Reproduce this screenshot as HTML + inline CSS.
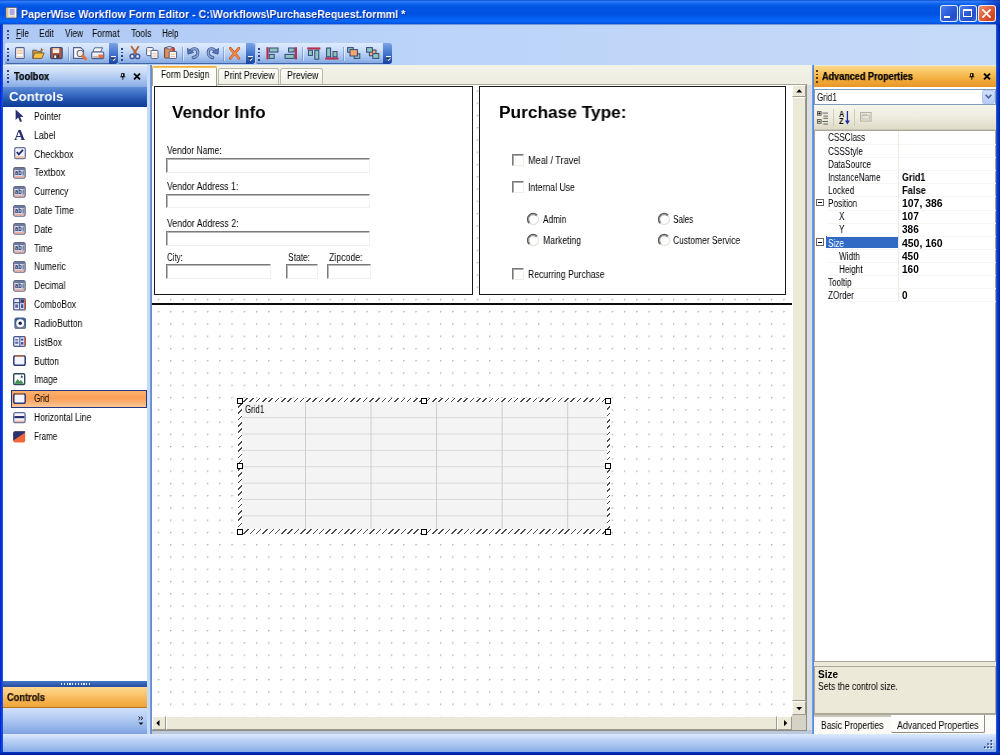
<!DOCTYPE html>
<html><head><meta charset="utf-8"><title>PaperWise Workflow Form Editor</title>
<style>
*{box-sizing:border-box;margin:0;padding:0}
html,body{width:1000px;height:755px;overflow:hidden;background:#0831d9}
body{font-family:"Liberation Sans",sans-serif;font-size:10px;color:#000;position:relative}
.a{position:absolute}
.t{position:absolute;white-space:nowrap;line-height:14px;height:14px;transform-origin:0 50%;will-change:transform}
svg{position:absolute;overflow:visible}
.tb{background:linear-gradient(#deebfd 0,#cfe0fa 30%,#a9c5f0 70%,#83a9e2 100%);border-bottom:1px solid #4465a8;border-radius:2px 0 0 2px}
.tbend{background:linear-gradient(#7ba4e6 0,#4f7fd2 40%,#2c5cba 75%,#17429e 100%);border-radius:0 3px 3px 0}
.grip{width:2px;background-image:repeating-linear-gradient(#2a4488 0,#2a4488 1.7px,rgba(255,255,255,.0) 1.7px,rgba(255,255,255,0) 3.7px)}
.sep{width:1px;background:rgba(90,125,195,.55);box-shadow:1px 0 0 rgba(240,246,255,.6)}
.tx{border:1px solid;border-color:#7b7b7b #f1f0ea #f1f0ea #7b7b7b;background:#fff;box-shadow:inset 1px 1px 0 #b9b9b9}
.cb{border:1px solid;border-color:#7a7a7a #eeede6 #eeede6 #7a7a7a;background:#fff;box-shadow:inset 1px 1px 0 #a8a8a8}
.hd{border:1px solid #000;background:#fff;width:6px;height:6px}
</style></head><body>
<div class="a" style="left:0px;top:0px;width:1000px;height:755px;background:#0a3bd6"></div>
<div class="a" style="left:0px;top:24px;width:3.4px;height:731px;background:linear-gradient(90deg,#0318d4,#0c3ede 45%,#1256e4)"></div>
<div class="a" style="left:996.3px;top:24px;width:3.7px;height:731px;background:linear-gradient(90deg,#2d66dc,#0a3cc8 35%,#001eb0)"></div>
<div class="a" style="left:0px;top:751.3px;width:1000px;height:3.7px;background:linear-gradient(#0a44d0,#0030b8 40%,#00199c)"></div>
<div class="a" style="left:0px;top:0px;width:1000px;height:24.5px;background:linear-gradient(#0c48d2 0,#2f7cf5 5%,#2373f3 10%,#0a5eee 18%,#0054e4 30%,#0052e2 58%,#0560f2 72%,#0866f6 86%,#0456e4 93%,#003cc4 100%)"></div>
<div class="a" style="left:900px;top:0px;width:100px;height:24.5px;background:linear-gradient(90deg,rgba(0,30,160,0) 0,rgba(0,30,160,0) 80%,rgba(0,26,150,.55) 100%)"></div>
<svg style="left:5.4px;top:7px" width="13" height="11.6" viewBox="0 0 13 14" preserveAspectRatio="none"><rect x="1" y="0.6" width="10.8" height="12.6" rx="1" fill="#fbf7ee" stroke="#6a5c50" stroke-width=".9"/><rect x="1.5" y="1.1" width="2" height="11.6" fill="#e0c08c"/><rect x="4.6" y="2.2" width="5" height="7.4" fill="#a9a6ea"/><rect x="4.6" y="10.2" width="5.4" height="1.6" fill="#e6cfae"/></svg>
<span class="t" style="left:20.8px;top:7.0px;font-size:11.5px;font-weight:bold;color:#fff;transform:scaleX(0.925);text-shadow:1px 1px 0 #0a2a90">PaperWise Workflow Form Editor - C:\Workflows\PurchaseRequest.formml *</span>
<div class="a" style="left:940px;top:5px;width:17.5px;height:17.2px;border:1px solid rgba(255,255,255,.88);border-radius:3px;background:linear-gradient(135deg,#4d7fee 0,#2f5fdc 40%,#2450c8 75%,#3a66d8 100%)"><div class="a" style="left:3.4px;top:10px;width:5.8px;height:2px;background:#fff"></div></div>
<div class="a" style="left:959px;top:5px;width:17.5px;height:17.2px;border:1px solid rgba(255,255,255,.88);border-radius:3px;background:linear-gradient(135deg,#4d7fee 0,#2f5fdc 40%,#2450c8 75%,#3a66d8 100%)"><div class="a" style="left:2.8px;top:3.2px;width:9.2px;height:8.2px;border:1.1px solid #fff;border-top-width:2.2px"></div></div>
<div class="a" style="left:978px;top:5px;width:17.5px;height:17.2px;border:1px solid rgba(255,255,255,.88);border-radius:3px;background:linear-gradient(135deg,#ee9276 0,#e2643e 40%,#cf4420 80%,#dc5834 100%)"><svg style="left:3px;top:2.8px" width="9" height="9" viewBox="0 0 10 10"><path d="M1 1L9 9M9 1L1 9" stroke="#fff" stroke-width="1.9" stroke-linecap="round"/></svg></div>
<div class="a" style="left:3.4px;top:24.3px;width:993px;height:41px;background:linear-gradient(90deg,#adc8f4 0,#bcd4f8 45%,#c4daf9 100%)"></div>
<div class="a" style="left:3.4px;top:24.3px;width:993px;height:1.2px;background:rgba(60,100,200,.55)"></div>
<div class="a grip" style="left:6.6px;top:29.6px;width:2px;height:10px;"></div>
<span class="t" style="left:16.1px;top:26.9px;font-size:10px;transform:scaleX(0.800);">File</span>
<span class="t" style="left:38.8px;top:26.9px;font-size:10px;transform:scaleX(0.853);">Edit</span>
<span class="t" style="left:64.5px;top:26.9px;font-size:10px;transform:scaleX(0.837);">View</span>
<span class="t" style="left:92.0px;top:26.9px;font-size:10px;transform:scaleX(0.865);">Format</span>
<span class="t" style="left:131.0px;top:26.9px;font-size:10px;transform:scaleX(0.878);">Tools</span>
<span class="t" style="left:161.5px;top:26.9px;font-size:10px;transform:scaleX(0.802);">Help</span>
<div class="a" style="left:16.3px;top:38.2px;width:5.2px;height:0.9px;background:#222"></div>
<div class="a tb" style="left:5px;top:43.4px;width:103.6px;height:20.4px;"></div>
<div class="a tbend" style="left:108.6px;top:43.4px;width:9.0px;height:20.4px;"></div>
<div class="a grip" style="left:7.3px;top:48px;width:2px;height:13px;"></div>
<svg style="left:109.8px;top:56.3px" width="7" height="6" viewBox="0 0 7 6"><path d="M1 0.6H6" stroke="#fff" stroke-width="1"/><path d="M1 2.4H6L3.5 5Z" fill="#fff"/><path d="M0.5 1.8H5.2L2.9 4.2Z" fill="#000" opacity=".75"/></svg>
<div class="a tb" style="left:118.2px;top:43.4px;width:127.49999999999999px;height:20.4px;"></div>
<div class="a tbend" style="left:245.7px;top:43.4px;width:9.0px;height:20.4px;"></div>
<div class="a grip" style="left:120.5px;top:48px;width:2px;height:13px;"></div>
<svg style="left:246.89999999999998px;top:56.3px" width="7" height="6" viewBox="0 0 7 6"><path d="M1 0.6H6" stroke="#fff" stroke-width="1"/><path d="M1 2.4H6L3.5 5Z" fill="#fff"/><path d="M0.5 1.8H5.2L2.9 4.2Z" fill="#000" opacity=".75"/></svg>
<div class="a tb" style="left:255.8px;top:43.4px;width:127.59999999999997px;height:20.4px;"></div>
<div class="a tbend" style="left:383.4px;top:43.4px;width:8.900000000000034px;height:20.4px;"></div>
<div class="a grip" style="left:258.1px;top:48px;width:2px;height:13px;"></div>
<svg style="left:384.59999999999997px;top:56.3px" width="7" height="6" viewBox="0 0 7 6"><path d="M1 0.6H6" stroke="#fff" stroke-width="1"/><path d="M1 2.4H6L3.5 5Z" fill="#fff"/><path d="M0.5 1.8H5.2L2.9 4.2Z" fill="#000" opacity=".75"/></svg>
<div class="a sep" style="left:67.6px;top:46.5px;width:1px;height:14px;"></div>
<div class="a sep" style="left:181.7px;top:46.5px;width:1px;height:14px;"></div>
<div class="a sep" style="left:222.8px;top:46.5px;width:1px;height:14px;"></div>
<div class="a sep" style="left:301.6px;top:46.5px;width:1px;height:14px;"></div>
<div class="a sep" style="left:342.7px;top:46.5px;width:1px;height:14px;"></div>
<svg style="left:15.3px;top:47px" width="10" height="12" viewBox="0 0 10 12" preserveAspectRatio="none"><rect x=".6" y=".6" width="8.6" height="10.8" rx="1" fill="#fdfaf6" stroke="#4e5f8e" stroke-width="1.1"/><rect x="2" y="2.8" width="5.8" height="1.6" fill="#f2c4a4"/><rect x="2" y="5.4" width="5.8" height="1.6" fill="#f2c4a4"/><rect x="1.2" y="9" width="7.4" height="1.8" fill="#e9d9d0"/></svg>
<svg style="left:32.2px;top:46.6px" width="13" height="12.4" viewBox="0 0 13 12.4" preserveAspectRatio="none"><path d="M.8 3.2H4.6L5.6 4.4H9.6V11.4H.8Z" fill="#d89a28" stroke="#5a5a78" stroke-width="1"/><path d="M2.6 6H12.2L9.8 11.4H.9Z" fill="#f6c244" stroke="#7a5a30" stroke-width=".9"/><path d="M9.4 .6L10.2 2.2L11.8 2.6L10.4 3.4L10.2 4.8L9.2 3.6L7.8 3.6L8.8 2.4Z" fill="#a8643c"/></svg>
<svg style="left:49.8px;top:46.8px" width="13" height="12.2" viewBox="0 0 13 12.2" preserveAspectRatio="none"><rect x=".6" y=".6" width="11.6" height="11" rx="1" fill="#a85a42" stroke="#3d4a78" stroke-width="1.1"/><rect x="2.8" y="1.2" width="6.4" height="4.8" fill="#fbeee6"/><rect x="2.8" y="1.2" width="6.4" height="1.6" fill="#f2c4a4"/><rect x="3.2" y="7.6" width="6" height="3.6" fill="#58383a"/><rect x="4.2" y="8.4" width="2" height="2.6" fill="#f4f4f8"/></svg>
<svg style="left:73px;top:46.8px" width="14" height="13.4" viewBox="0 0 14 13.4" preserveAspectRatio="none"><path d="M.6 .6H7.6L10.6 3.4V11.4H.6Z" fill="#fdfcfa" stroke="#4e5f8e" stroke-width="1.1"/><circle cx="7.2" cy="6.4" r="3.1" fill="#f2eee8" stroke="#6a6a80" stroke-width="1.1"/><path d="M9.6 8.8L12.6 12" stroke="#e8703a" stroke-width="2.8" stroke-linecap="round"/></svg>
<svg style="left:90.8px;top:46.6px" width="13.4" height="12.8" viewBox="0 0 13.4 12.8" preserveAspectRatio="none"><path d="M3.6 .8H11.6L9.6 5H1.8Z" fill="#fbfbfd" stroke="#4e5f8e" stroke-width="1"/><rect x=".7" y="5" width="12" height="6.6" rx="1.2" fill="#eef0f6" stroke="#4e5f8e" stroke-width="1.1"/><rect x="7.4" y="7.6" width="4.8" height="3.4" fill="#e8703a"/><rect x="1.6" y="9.2" width="5.6" height="1.6" fill="#b8a8a8"/></svg>
<svg style="left:129.2px;top:46.2px" width="12" height="13.6" viewBox="0 0 12 13.6" preserveAspectRatio="none"><path d="M2.6 .8L7.6 8.4M9.4 .8L4.4 8.4" stroke="#b8683a" stroke-width="1.9" stroke-linecap="round"/><circle cx="3.2" cy="10.4" r="2.1" fill="#dfe8f8" stroke="#3f5aa0" stroke-width="1.5"/><circle cx="8.6" cy="10.4" r="2.1" fill="#dfe8f8" stroke="#3f5aa0" stroke-width="1.5"/></svg>
<svg style="left:146.4px;top:47px" width="13" height="12" viewBox="0 0 13 12" preserveAspectRatio="none"><rect x=".6" y=".6" width="6.6" height="8" rx=".8" fill="#fdfcfa" stroke="#4e5f8e" stroke-width="1"/><rect x="1.8" y="3" width="4" height="1.3" fill="#f2c4a4"/><rect x="5" y="3.4" width="7" height="8" rx=".8" fill="#fdfcfa" stroke="#4e5f8e" stroke-width="1"/><rect x="6.4" y="6" width="4.4" height="1.3" fill="#f2c4a4"/><rect x="6.4" y="8.4" width="4.4" height="1.3" fill="#f2c4a4"/></svg>
<svg style="left:163.8px;top:46.4px" width="13.4" height="13" viewBox="0 0 13.4 13" preserveAspectRatio="none"><rect x=".6" y="1.6" width="9.6" height="10.4" rx="1" fill="#e0925a" stroke="#6a4a48" stroke-width="1.1"/><rect x="3" y=".5" width="4.8" height="2.6" rx=".8" fill="#c8c8d8" stroke="#5a5a78" stroke-width=".8"/><rect x="8.2" y="2.2" width="2.4" height="3" fill="#d83a28"/><rect x="5.2" y="5.4" width="7.4" height="7" rx=".6" fill="#fdfcfa" stroke="#4e5f8e" stroke-width="1"/><rect x="6.6" y="7.6" width="4.6" height="1.2" fill="#f2c4a4"/><rect x="6.6" y="9.8" width="4.6" height="1.2" fill="#f2c4a4"/></svg>
<svg style="left:187px;top:46.2px" width="13" height="13" viewBox="0 0 13 13" preserveAspectRatio="none"><path d="M3.4 5.6C5.4 1.6 10.4 2 10.8 6.2C11 9.2 8.8 11.2 6.2 11.6" fill="none" stroke="#405890" stroke-width="3.1" stroke-linecap="round"/><path d="M3.4 5.6C5.4 1.6 10.4 2 10.8 6.2C11 9.2 8.8 11.2 6.2 11.6" fill="none" stroke="#8aa4d8" stroke-width="1.5" stroke-linecap="round"/><path d="M.4 2.4L1 8.2L6.6 6.4Z" fill="#5a78b8" stroke="#405890" stroke-width=".9" stroke-linejoin="round"/></svg>
<svg style="left:205.6px;top:46.2px" width="13" height="13" viewBox="0 0 13 13" preserveAspectRatio="none"><g transform="translate(13,0) scale(-1,1)"><path d="M3.4 5.6C5.4 1.6 10.4 2 10.8 6.2C11 9.2 8.8 11.2 6.2 11.6" fill="none" stroke="#405890" stroke-width="3.1" stroke-linecap="round"/><path d="M3.4 5.6C5.4 1.6 10.4 2 10.8 6.2C11 9.2 8.8 11.2 6.2 11.6" fill="none" stroke="#8aa4d8" stroke-width="1.5" stroke-linecap="round"/><path d="M.4 2.4L1 8.2L6.6 6.4Z" fill="#5a78b8" stroke="#405890" stroke-width=".9" stroke-linejoin="round"/></g></svg>
<svg style="left:229.4px;top:46.6px" width="11.2" height="12.6" viewBox="0 0 13.4 13" preserveAspectRatio="none"><path d="M1.6 1.4L11.8 11.6M11.8 1.4L1.6 11.6" stroke="#c85a28" stroke-width="3.2" stroke-linecap="round"/><path d="M1.8 1.6L11.6 11.4M11.6 1.6L1.8 11.4" stroke="#f48a44" stroke-width="1.7" stroke-linecap="round"/></svg>
<svg style="left:266px;top:46.8px" width="13" height="12.6" viewBox="0 0 13 12.6" preserveAspectRatio="none"><rect x=".4" y=".2" width="2.2" height="12.2" fill="#b8324e"/><rect x="3.2" y="1" width="8.8" height="4" fill="#8cc8b8" stroke="#35457c" stroke-width="1"/><rect x="3.2" y="7.4" width="5" height="4" fill="#8cc8b8" stroke="#35457c" stroke-width="1"/></svg>
<svg style="left:283.8px;top:46.8px" width="13.4" height="12.6" viewBox="0 0 13.4 12.6" preserveAspectRatio="none"><rect x="10.8" y=".2" width="2.2" height="12.2" fill="#b8324e"/><rect x="4.6" y="1" width="5.6" height="4" fill="#8cc8b8" stroke="#35457c" stroke-width="1"/><rect x="1" y="7.4" width="9.2" height="4" fill="#8cc8b8" stroke="#35457c" stroke-width="1"/></svg>
<svg style="left:306.8px;top:46.6px" width="13.6" height="13" viewBox="0 0 13.6 13" preserveAspectRatio="none"><rect x=".2" y=".4" width="13.2" height="2.2" fill="#b8324e"/><rect x="1.4" y="3.2" width="4" height="5.2" fill="#8cc8b8" stroke="#35457c" stroke-width="1"/><rect x="7.8" y="3.2" width="4" height="9" fill="#8cc8b8" stroke="#35457c" stroke-width="1"/></svg>
<svg style="left:324.6px;top:46.6px" width="13.6" height="13" viewBox="0 0 13.6 13" preserveAspectRatio="none"><rect x=".2" y="10.4" width="13.2" height="2.2" fill="#b8324e"/><rect x="1.6" y="1" width="4" height="8.8" fill="#8cc8b8" stroke="#35457c" stroke-width="1"/><rect x="8" y="4.6" width="4" height="5.2" fill="#8cc8b8" stroke="#35457c" stroke-width="1"/></svg>
<svg style="left:347px;top:47px" width="13.6" height="12.4" viewBox="0 0 13.6 12.4" preserveAspectRatio="none"><rect x="0.6" y="0.6" width="5.6" height="4.6" fill="#8cc8b8" stroke="#35457c" stroke-width="1"/><rect x="7.2" y="6.8" width="5.6" height="4.6" fill="#8cc8b8" stroke="#35457c" stroke-width="1"/><rect x="3" y="2.6" width="7.4" height="6.4" fill="#f6a868" stroke="#35457c" stroke-width="1"/></svg>
<svg style="left:365.8px;top:47px" width="13.6" height="12.4" viewBox="0 0 13.6 12.4" preserveAspectRatio="none"><rect x="3.4" y="3" width="6.6" height="5.8" fill="#f6a868" stroke="#35457c" stroke-width="1"/><rect x="0.6" y="0.6" width="5.8" height="4.6" fill="#8cc8b8" stroke="#35457c" stroke-width="1"/><rect x="6.8" y="6.6" width="6" height="4.8" fill="#8cc8b8" stroke="#35457c" stroke-width="1"/></svg>
<div class="a" style="left:3.4px;top:65px;width:143.9px;height:669px;background:#fff"></div>
<div class="a" style="left:3.4px;top:65.3px;width:143.9px;height:21.9px;background:linear-gradient(#dbe8fb 0,#cadcf8 30%,#a6c2ee 70%,#87abe4 100%)"></div>
<div class="a" style="left:3.4px;top:65px;width:143.9px;height:0.8px;background:#eef4fd"></div>
<div class="a grip" style="left:7px;top:69.6px;width:2px;height:14px;"></div>
<span class="t" style="left:14.1px;top:69.6px;font-size:10px;font-weight:bold;transform:scaleX(0.923);-webkit-text-stroke:.25px #000">Toolbox</span>
<svg style="left:119.8px;top:73.2px" width="5.6" height="7.2" viewBox="0 0 7 9"><path d="M1.8 0.7H5.2V4.4H1.8Z" fill="none" stroke="#000" stroke-width="1"/><path d="M4.6 0.7V4.4" stroke="#000" stroke-width="1.2"/><path d="M0.4 4.8H6.6" stroke="#000" stroke-width="1.1"/><path d="M3.5 5V8.6" stroke="#000" stroke-width="1"/></svg>
<svg style="left:133.3px;top:72.8px" width="8" height="7" viewBox="0 0 8 7"><path d="M1 0.6L7 6.4M7 0.6L1 6.4" stroke="#000" stroke-width="1.9"/></svg>
<div class="a" style="left:3.4px;top:87.1px;width:143.9px;height:19.6px;background:linear-gradient(#5f8cd8 0,#3f72c8 30%,#1c4fa8 70%,#0c3c96 100%)"></div>
<span class="t" style="left:8.8px;top:90.4px;font-size:13.5px;font-weight:bold;color:#fff;transform:scaleX(0.980);">Controls</span>
<div class="a" style="left:11.4px;top:389.9px;width:135.9px;height:17.7px;border:1px solid #27357e;background:linear-gradient(#fbb26e 0,#fa9f58 45%,#fbb77c 80%,#fcc998 100%)"></div>
<span class="t" style="left:33.7px;top:109.8px;font-size:10px;transform:scaleX(0.855);">Pointer</span>
<span class="t" style="left:33.7px;top:128.7px;font-size:10px;transform:scaleX(0.875);">Label</span>
<span class="t" style="left:33.7px;top:147.5px;font-size:10px;transform:scaleX(0.888);">Checkbox</span>
<span class="t" style="left:33.7px;top:166.3px;font-size:10px;transform:scaleX(0.902);">Textbox</span>
<span class="t" style="left:33.7px;top:185.1px;font-size:10px;transform:scaleX(0.848);">Currency</span>
<span class="t" style="left:33.7px;top:203.9px;font-size:10px;transform:scaleX(0.875);">Date Time</span>
<span class="t" style="left:33.7px;top:222.8px;font-size:10px;transform:scaleX(0.876);">Date</span>
<span class="t" style="left:33.7px;top:241.6px;font-size:10px;transform:scaleX(0.846);">Time</span>
<span class="t" style="left:33.7px;top:260.4px;font-size:10px;transform:scaleX(0.851);">Numeric</span>
<span class="t" style="left:33.7px;top:279.2px;font-size:10px;transform:scaleX(0.869);">Decimal</span>
<span class="t" style="left:33.7px;top:298.0px;font-size:10px;transform:scaleX(0.849);">ComboBox</span>
<span class="t" style="left:33.7px;top:316.9px;font-size:10px;transform:scaleX(0.879);">RadioButton</span>
<span class="t" style="left:33.7px;top:335.7px;font-size:10px;transform:scaleX(0.854);">ListBox</span>
<span class="t" style="left:33.7px;top:354.5px;font-size:10px;transform:scaleX(0.868);">Button</span>
<span class="t" style="left:33.7px;top:373.3px;font-size:10px;transform:scaleX(0.845);">Image</span>
<span class="t" style="left:33.7px;top:392.1px;font-size:10px;transform:scaleX(0.809);">Grid</span>
<span class="t" style="left:33.7px;top:411.0px;font-size:10px;transform:scaleX(0.859);">Horizontal Line</span>
<span class="t" style="left:33.7px;top:429.8px;font-size:10px;transform:scaleX(0.806);">Frame</span>
<svg style="left:15.2px;top:109.2px" width="9.6" height="13.6" viewBox="0 0 9 13" preserveAspectRatio="none"><path d="M.6 .4V10.4L3 8.2L4.8 12.4L6.6 11.6L4.8 7.6L8 7.4Z" fill="#2a3170"/></svg>
<span class="t" style="left:14.4px;top:126.6px;font-family:'Liberation Serif',serif;font-weight:bold;font-size:15.4px;line-height:16px;height:16px;color:#2a3170">A</span>
<svg style="left:14px;top:147.44px" width="12" height="12.4" viewBox="0 0 12 12.4" preserveAspectRatio="none"><rect x=".7" y=".7" width="10.6" height="11" rx="1.4" fill="#eef0fa" stroke="#6a7498" stroke-width="1.3"/><rect x="1.6" y="9.2" width="8.8" height="1.9" fill="#f2c4a4"/><path d="M2.8 5L4.8 7.4L9 2.8" fill="none" stroke="#2a3170" stroke-width="1.9"/></svg>
<svg style="left:13.2px;top:166.86px" width="13" height="12" viewBox="0 0 13 12" preserveAspectRatio="none"><rect x=".7" y=".7" width="11.4" height="10.4" rx="1.6" fill="#d6daee" stroke="#5e6886" stroke-width="1.3"/><rect x="1.4" y="1.3" width="10" height="1.5" fill="#4f5f88"/><rect x="1.5" y="9" width="9.8" height="1.7" fill="#eab0a0"/><text x="2.1" y="8.3" font-family="Liberation Sans,sans-serif" font-size="6.6" font-weight="bold" fill="#2c3462" textLength="6.6" lengthAdjust="spacingAndGlyphs">ab</text><rect x="9.7" y="3.6" width=".8" height="4.8" fill="#2c3462"/></svg>
<svg style="left:13.2px;top:185.68px" width="13" height="12" viewBox="0 0 13 12" preserveAspectRatio="none"><rect x=".7" y=".7" width="11.4" height="10.4" rx="1.6" fill="#d6daee" stroke="#5e6886" stroke-width="1.3"/><rect x="1.4" y="1.3" width="10" height="1.5" fill="#4f5f88"/><rect x="1.5" y="9" width="9.8" height="1.7" fill="#eab0a0"/><text x="2.1" y="8.3" font-family="Liberation Sans,sans-serif" font-size="6.6" font-weight="bold" fill="#2c3462" textLength="6.6" lengthAdjust="spacingAndGlyphs">ab</text><rect x="9.7" y="3.6" width=".8" height="4.8" fill="#2c3462"/></svg>
<svg style="left:13.2px;top:204.5px" width="13" height="12" viewBox="0 0 13 12" preserveAspectRatio="none"><rect x=".7" y=".7" width="11.4" height="10.4" rx="1.6" fill="#d6daee" stroke="#5e6886" stroke-width="1.3"/><rect x="1.4" y="1.3" width="10" height="1.5" fill="#4f5f88"/><rect x="1.5" y="9" width="9.8" height="1.7" fill="#eab0a0"/><text x="2.1" y="8.3" font-family="Liberation Sans,sans-serif" font-size="6.6" font-weight="bold" fill="#2c3462" textLength="6.6" lengthAdjust="spacingAndGlyphs">ab</text><rect x="9.7" y="3.6" width=".8" height="4.8" fill="#2c3462"/></svg>
<svg style="left:13.2px;top:223.32000000000002px" width="13" height="12" viewBox="0 0 13 12" preserveAspectRatio="none"><rect x=".7" y=".7" width="11.4" height="10.4" rx="1.6" fill="#d6daee" stroke="#5e6886" stroke-width="1.3"/><rect x="1.4" y="1.3" width="10" height="1.5" fill="#4f5f88"/><rect x="1.5" y="9" width="9.8" height="1.7" fill="#eab0a0"/><text x="2.1" y="8.3" font-family="Liberation Sans,sans-serif" font-size="6.6" font-weight="bold" fill="#2c3462" textLength="6.6" lengthAdjust="spacingAndGlyphs">ab</text><rect x="9.7" y="3.6" width=".8" height="4.8" fill="#2c3462"/></svg>
<svg style="left:13.2px;top:242.14000000000001px" width="13" height="12" viewBox="0 0 13 12" preserveAspectRatio="none"><rect x=".7" y=".7" width="11.4" height="10.4" rx="1.6" fill="#d6daee" stroke="#5e6886" stroke-width="1.3"/><rect x="1.4" y="1.3" width="10" height="1.5" fill="#4f5f88"/><rect x="1.5" y="9" width="9.8" height="1.7" fill="#eab0a0"/><text x="2.1" y="8.3" font-family="Liberation Sans,sans-serif" font-size="6.6" font-weight="bold" fill="#2c3462" textLength="6.6" lengthAdjust="spacingAndGlyphs">ab</text><rect x="9.7" y="3.6" width=".8" height="4.8" fill="#2c3462"/></svg>
<svg style="left:13.2px;top:260.96px" width="13" height="12" viewBox="0 0 13 12" preserveAspectRatio="none"><rect x=".7" y=".7" width="11.4" height="10.4" rx="1.6" fill="#d6daee" stroke="#5e6886" stroke-width="1.3"/><rect x="1.4" y="1.3" width="10" height="1.5" fill="#4f5f88"/><rect x="1.5" y="9" width="9.8" height="1.7" fill="#eab0a0"/><text x="2.1" y="8.3" font-family="Liberation Sans,sans-serif" font-size="6.6" font-weight="bold" fill="#2c3462" textLength="6.6" lengthAdjust="spacingAndGlyphs">ab</text><rect x="9.7" y="3.6" width=".8" height="4.8" fill="#2c3462"/></svg>
<svg style="left:13.2px;top:279.78px" width="13" height="12" viewBox="0 0 13 12" preserveAspectRatio="none"><rect x=".7" y=".7" width="11.4" height="10.4" rx="1.6" fill="#d6daee" stroke="#5e6886" stroke-width="1.3"/><rect x="1.4" y="1.3" width="10" height="1.5" fill="#4f5f88"/><rect x="1.5" y="9" width="9.8" height="1.7" fill="#eab0a0"/><text x="2.1" y="8.3" font-family="Liberation Sans,sans-serif" font-size="6.6" font-weight="bold" fill="#2c3462" textLength="6.6" lengthAdjust="spacingAndGlyphs">ab</text><rect x="9.7" y="3.6" width=".8" height="4.8" fill="#2c3462"/></svg>
<svg style="left:13.2px;top:298.0px" width="13" height="12.6" viewBox="0 0 13 12.6" preserveAspectRatio="none"><rect x=".7" y=".7" width="11.6" height="11.2" rx="1" fill="#eceffa" stroke="#4a5a90" stroke-width="1.3"/><path d="M.8 4.6H12.2M6.6 .8V12" stroke="#4a5a90" stroke-width="1.1"/><rect x="7.4" y="1.4" width="4.2" height="2.6" fill="#3a3a6a"/><rect x="11" y="1" width="1.4" height="10.6" fill="#d8684a"/><rect x="2.2" y="6.4" width="3" height="3.4" fill="#5a6aa0"/><rect x="8" y="6.2" width="2.4" height="4" fill="#3f56a8"/></svg>
<svg style="left:13.8px;top:316.82px" width="12.4" height="12.4" viewBox="0 0 12.4 12.4" preserveAspectRatio="none"><rect x=".4" y=".4" width="11.6" height="11.6" rx="2.6" fill="#3f5f90"/><rect x=".4" y="8" width="11.6" height="4" rx="2" fill="#8a8a98" opacity=".6"/><circle cx="6.2" cy="6.2" r="4" fill="#f8f8fc"/><circle cx="6.2" cy="6.2" r="1.7" fill="#1e2248"/></svg>
<svg style="left:13.2px;top:336.24px" width="13" height="11" viewBox="0 0 13 11" preserveAspectRatio="none"><rect x=".7" y=".7" width="11.6" height="9.6" rx="1" fill="#e6eafa" stroke="#4a5a90" stroke-width="1.3"/><path d="M6.8 .8V10.2" stroke="#4a5a90" stroke-width="1.1"/><rect x="11" y="1" width="1.4" height="9" fill="#d8684a"/><rect x="2.2" y="3.2" width="3" height="1.2" fill="#4a5a90"/><rect x="2.2" y="5.6" width="3" height="2.2" fill="#5a6aa0"/><rect x="8" y="2.6" width="2.4" height="2" fill="#3f56a8"/><rect x="8" y="6" width="2.4" height="2.6" fill="#3f56a8"/></svg>
<svg style="left:13.2px;top:355.46px" width="13" height="11" viewBox="0 0 13 11" preserveAspectRatio="none"><rect x=".8" y=".8" width="11.4" height="9.4" rx="1.8" fill="#f4f4fc" stroke="#2c3a7c" stroke-width="1.5"/><path d="M2 1H11" stroke="#c87a4a" stroke-width="1.4"/></svg>
<svg style="left:13.4px;top:373.28000000000003px" width="12.6" height="12.4" viewBox="0 0 12.6 12.4" preserveAspectRatio="none"><rect x=".7" y=".7" width="11" height="10.8" rx="1.2" fill="#fbfcfb" stroke="#2f4a5c" stroke-width="1.4"/><path d="M1.4 10.8L4.6 6L6.6 8.4L8 7L10.8 10.8Z" fill="#3f8f52"/><path d="M8.6 2L9.2 3.2L10.4 3.4L9.4 4.2L9.4 5.4L8.4 4.6L7.2 4.8L8 3.6Z" fill="#3a4a5a"/></svg>
<svg style="left:13.2px;top:393.1px" width="13" height="11" viewBox="0 0 13 11" preserveAspectRatio="none"><rect x=".8" y=".8" width="11.4" height="9.4" rx="1.8" fill="#f4f4fc" stroke="#2c3a7c" stroke-width="1.5"/><path d="M2 1H11" stroke="#c87a4a" stroke-width="1.4"/></svg>
<svg style="left:13.2px;top:411.52px" width="13" height="11.6" viewBox="0 0 13 11.6" preserveAspectRatio="none"><rect x=".7" y=".7" width="11.4" height="10" rx="1.8" fill="#f4f4fa" stroke="#5a6a9c" stroke-width="1.3"/><rect x="1.6" y="8.6" width="9.6" height="1.6" fill="#eab8a0"/><rect x="1.4" y="4" width="10" height="2.2" fill="#2a3170"/></svg>
<svg style="left:13.4px;top:430.74px" width="12.6" height="11.6" viewBox="0 0 12.6 11.6" preserveAspectRatio="none"><rect x=".2" y=".2" width="12" height="11.4" rx="2" fill="#f0683a"/><path d="M.2 2.2Q.2 .2 2.2 .2H12.2V1.6L.2 9.4Z" fill="#2a3170"/></svg>
<div class="a" style="left:3.4px;top:680.8px;width:143.9px;height:6.2px;background:linear-gradient(#4a78c8,#2f5cb0 60%,#234c9c)"></div>
<div class="a" style="left:60.6px;top:682.8px;width:29px;height:1.8px;background-image:repeating-linear-gradient(90deg,#dfe9fb 0,#dfe9fb 1.2px,rgba(255,255,255,0) 1.2px,rgba(255,255,255,0) 2.8px)"></div>
<div class="a" style="left:3.4px;top:687px;width:143.9px;height:20.8px;background:linear-gradient(#fdd791 0,#fbc975 30%,#f5b24e 70%,#efa43a 100%);border-bottom:1px solid #b8761c"></div>
<span class="t" style="left:7.2px;top:691.2px;font-size:10px;font-weight:bold;color:#1a1208;transform:scaleX(0.924);-webkit-text-stroke:.25px #1a1208">Controls</span>
<div class="a" style="left:3.4px;top:707.8px;width:143.9px;height:26px;background:linear-gradient(#cfe0fa 0,#b4ccf4 40%,#8fb0e8 80%,#7fa3e2 100%)"></div>
<svg style="left:137.5px;top:716px" width="6" height="10" viewBox="0 0 6 10"><path d="M0.5 0.5L2.3 2.2L0.5 3.9M3 0.5L4.8 2.2L3 3.9" fill="none" stroke="#111" stroke-width="1"/><path d="M0.6 6.6H5.4L3 9Z" fill="#111"/></svg>
<div class="a" style="left:147.3px;top:65px;width:3.2px;height:669px;background:#c6dbf8"></div>
<div class="a" style="left:150.3px;top:65px;width:1.8px;height:669px;background:linear-gradient(90deg,#7fa0d8,#5f86c8)"></div>
<div class="a" style="left:152px;top:65px;width:659.5px;height:21px;background:linear-gradient(#f3f2e8,#eeede0)"></div>
<div class="a" style="left:152px;top:84.3px;width:654.5px;height:1.2px;background:#a9a899"></div>
<div class="a" style="left:152px;top:85.4px;width:640px;height:631px;background-color:#fff;background-image:radial-gradient(circle at .7px .7px,#adadad 0,#adadad .55px,rgba(255,255,255,0) 1px);background-size:12.27px 12.27px;background-position:5.8px 5.3px"></div>
<div class="a" style="left:152px;top:66px;width:65px;height:19.6px;background:#fdfdfa;border-radius:3px 3px 0 0;border:1px solid #a4a394;border-bottom:none;border-top:none"></div>
<div class="a" style="left:152px;top:65.8px;width:65px;height:2.4px;background:linear-gradient(#f0a52c,#fbcf6a);border-radius:3px 3px 0 0"></div>
<div class="a" style="left:217.6px;top:68px;width:61px;height:16.4px;background:linear-gradient(#fdfdfb,#f1f0e6);border:1px solid #bcbaab;border-bottom:none;border-radius:3px 3px 0 0"></div>
<div class="a" style="left:279.8px;top:68px;width:43px;height:16.4px;background:linear-gradient(#fdfdfb,#f1f0e6);border:1px solid #bcbaab;border-bottom:none;border-radius:3px 3px 0 0"></div>
<span class="t" style="left:160.6px;top:67.9px;font-size:10px;transform:scaleX(0.845);">Form Design</span>
<span class="t" style="left:223.6px;top:69.3px;font-size:10px;transform:scaleX(0.856);">Print Preview</span>
<span class="t" style="left:286.6px;top:69.3px;font-size:10px;transform:scaleX(0.883);">Preview</span>
<div class="a" style="left:154px;top:86px;width:319px;height:209px;border:1.3px solid #1a1a1a;background:#fff"></div>
<div class="a" style="left:479px;top:86px;width:307px;height:209px;border:1.3px solid #1a1a1a;background:#fff"></div>
<div class="a" style="left:152px;top:302.9px;width:640px;height:2.1px;background:#0c0c0c"></div>
<span class="t" style="left:172.4px;top:105.3px;font-size:17.4px;font-weight:bold;transform:scaleX(0.979);">Vendor Info</span>
<span class="t" style="left:498.7px;top:105.3px;font-size:17.4px;font-weight:bold;transform:scaleX(0.994);">Purchase Type:</span>
<span class="t" style="left:167.3px;top:144.2px;font-size:10px;transform:scaleX(0.856);">Vendor Name:</span>
<span class="t" style="left:167.0px;top:179.5px;font-size:10px;transform:scaleX(0.872);">Vendor Address 1:</span>
<span class="t" style="left:166.8px;top:216.8px;font-size:10px;transform:scaleX(0.875);">Vendor Address 2:</span>
<span class="t" style="left:167.3px;top:250.5px;font-size:10px;transform:scaleX(0.785);">City:</span>
<span class="t" style="left:287.5px;top:250.5px;font-size:10px;transform:scaleX(0.845);">State:</span>
<span class="t" style="left:328.8px;top:250.5px;font-size:10px;transform:scaleX(0.876);">Zipcode:</span>
<div class="a tx" style="left:165.6px;top:158.4px;width:204px;height:14.4px;"></div>
<div class="a tx" style="left:165.6px;top:193.8px;width:204px;height:14.4px;"></div>
<div class="a tx" style="left:165.6px;top:231.2px;width:204px;height:14.4px;"></div>
<div class="a tx" style="left:165.6px;top:264.3px;width:105.2px;height:14.4px;"></div>
<div class="a tx" style="left:285.6px;top:264.3px;width:32px;height:14.4px;"></div>
<div class="a tx" style="left:327.1px;top:264.3px;width:44.3px;height:14.4px;"></div>
<div class="a cb" style="left:512.2px;top:154.1px;width:12.3px;height:12.2px;"></div>
<span class="t" style="left:528.2px;top:154.4px;font-size:10px;transform:scaleX(0.915);">Meal / Travel</span>
<div class="a cb" style="left:512.2px;top:181px;width:12.3px;height:12.2px;"></div>
<span class="t" style="left:528.2px;top:181.3px;font-size:10px;transform:scaleX(0.868);">Internal Use</span>
<div class="a cb" style="left:512.2px;top:268px;width:12.3px;height:12.2px;"></div>
<span class="t" style="left:528.2px;top:268.3px;font-size:10px;transform:scaleX(0.867);">Recurring Purchase</span>
<svg style="left:527.3px;top:212.8px" width="12.4" height="12.4" viewBox="0 0 12.4 12.4"><circle cx="6.2" cy="6.2" r="5.4" fill="#fff" stroke="#e4e2da" stroke-width="1.1"/><path d="M2.2 10.2A5.6 5.6 0 0 1 10.2 2.2" fill="none" stroke="#5c5c5c" stroke-width="1.4"/><path d="M3 9.4A4.5 4.5 0 0 1 9.4 3" fill="none" stroke="#8a8a8a" stroke-width="1"/></svg>
<span class="t" style="left:542.9px;top:212.9px;font-size:10px;transform:scaleX(0.825);">Admin</span>
<svg style="left:527.3px;top:234.10000000000002px" width="12.4" height="12.4" viewBox="0 0 12.4 12.4"><circle cx="6.2" cy="6.2" r="5.4" fill="#fff" stroke="#e4e2da" stroke-width="1.1"/><path d="M2.2 10.2A5.6 5.6 0 0 1 10.2 2.2" fill="none" stroke="#5c5c5c" stroke-width="1.4"/><path d="M3 9.4A4.5 4.5 0 0 1 9.4 3" fill="none" stroke="#8a8a8a" stroke-width="1"/></svg>
<span class="t" style="left:542.9px;top:234.2px;font-size:10px;transform:scaleX(0.868);">Marketing</span>
<svg style="left:657.8px;top:212.8px" width="12.4" height="12.4" viewBox="0 0 12.4 12.4"><circle cx="6.2" cy="6.2" r="5.4" fill="#fff" stroke="#e4e2da" stroke-width="1.1"/><path d="M2.2 10.2A5.6 5.6 0 0 1 10.2 2.2" fill="none" stroke="#5c5c5c" stroke-width="1.4"/><path d="M3 9.4A4.5 4.5 0 0 1 9.4 3" fill="none" stroke="#8a8a8a" stroke-width="1"/></svg>
<span class="t" style="left:673.4px;top:212.9px;font-size:10px;transform:scaleX(0.811);">Sales</span>
<svg style="left:657.8px;top:234.10000000000002px" width="12.4" height="12.4" viewBox="0 0 12.4 12.4"><circle cx="6.2" cy="6.2" r="5.4" fill="#fff" stroke="#e4e2da" stroke-width="1.1"/><path d="M2.2 10.2A5.6 5.6 0 0 1 10.2 2.2" fill="none" stroke="#5c5c5c" stroke-width="1.4"/><path d="M3 9.4A4.5 4.5 0 0 1 9.4 3" fill="none" stroke="#8a8a8a" stroke-width="1"/></svg>
<span class="t" style="left:673.4px;top:234.2px;font-size:10px;transform:scaleX(0.844);">Customer Service</span>
<div class="a" style="left:238.2px;top:398.4px;width:372px;height:135.2px;background-color:#fff;background-image:repeating-linear-gradient(135deg,rgba(255,255,255,0) 0,rgba(255,255,255,0) 1.7px,#4c4c4c 1.7px,#4c4c4c 2.8px,rgba(255,255,255,0) 2.8px,rgba(255,255,255,0) 4.45px)"></div>
<div class="a" style="left:242px;top:401.6px;width:364.6px;height:127.6px;background-color:#f4f4f4;background-image:linear-gradient(90deg,#cdcdcd 0,#cdcdcd 1px,rgba(255,255,255,0) 1px),linear-gradient(#d8d8d8 0,#d8d8d8 1px,rgba(255,255,255,0) 1px);background-size:65.55px 200px,600px 16.37px;background-position:63px 0,0 15.2px"></div>
<span class="t" style="left:244.8px;top:402.6px;font-size:10px;transform:scaleX(0.785);">Grid1</span>
<div class="a hd" style="left:237.2px;top:398.2px;width:6px;height:6px;"></div>
<div class="a hd" style="left:237.2px;top:462.8px;width:6px;height:6px;"></div>
<div class="a hd" style="left:237.2px;top:529.2px;width:6px;height:6px;"></div>
<div class="a hd" style="left:420.8px;top:398.2px;width:6px;height:6px;"></div>
<div class="a hd" style="left:420.8px;top:529.2px;width:6px;height:6px;"></div>
<div class="a hd" style="left:605.2px;top:398.2px;width:6px;height:6px;"></div>
<div class="a hd" style="left:605.2px;top:462.8px;width:6px;height:6px;"></div>
<div class="a hd" style="left:605.2px;top:529.2px;width:6px;height:6px;"></div>
<div class="a" style="left:792px;top:85.4px;width:14px;height:631px;background:#f2f0e6"></div>
<div class="a" style="left:792px;top:85.4px;width:14px;height:12px;background:#ece9d8;border:1px solid;border-color:#fff #9c9a8c #9c9a8c #fff"></div>
<svg style="left:795.8px;top:89.4px" width="6.4" height="3.4" viewBox="0 0 7 4"><path d="M0 4H7L3.5 0.3Z" fill="#000"/></svg>
<div class="a" style="left:792px;top:97.4px;width:14px;height:604px;background:#ece9d8;border:1px solid;border-color:#fff #9c9a8c #9c9a8c #fff"></div>
<div class="a" style="left:792px;top:701.4px;width:14px;height:14px;background:#ece9d8;border:1px solid;border-color:#fff #9c9a8c #9c9a8c #fff"></div>
<svg style="left:795.8px;top:706.8px" width="6.4" height="3.4" viewBox="0 0 7 4"><path d="M0 0H7L3.5 3.7Z" fill="#000"/></svg>
<div class="a" style="left:152px;top:716.4px;width:640px;height:13.4px;background:#f2f0e6"></div>
<div class="a" style="left:152px;top:716.4px;width:13.5px;height:13.4px;background:#ece9d8;border:1px solid;border-color:#fff #9c9a8c #9c9a8c #fff"></div>
<svg style="left:156.4px;top:719.9px" width="3.5" height="6.2" viewBox="0 0 4 7"><path d="M4 0V7L0.3 3.5Z" fill="#000"/></svg>
<div class="a" style="left:165.5px;top:716.4px;width:611.5px;height:13.4px;background:#ece9d8;border:1px solid;border-color:#fff #9c9a8c #9c9a8c #fff"></div>
<div class="a" style="left:777px;top:716.4px;width:15px;height:13.4px;background:#ece9d8;border:1px solid;border-color:#fff #9c9a8c #9c9a8c #fff"></div>
<svg style="left:784px;top:719.9px" width="3.5" height="6.2" viewBox="0 0 4 7"><path d="M0 0V7L3.7 3.5Z" fill="#000"/></svg>
<div class="a" style="left:792px;top:715.4px;width:14px;height:14.4px;background:#d6d2c6"></div>
<div class="a" style="left:805.8px;top:84.3px;width:1px;height:645.5px;background:#8f8d80"></div>
<div class="a" style="left:806.8px;top:85.4px;width:4.8px;height:648px;background:#d9dde4"></div>
<div class="a" style="left:152px;top:729.8px;width:659.6px;height:4px;background:#bcc8dc"></div>
<div class="a" style="left:152px;top:729.6px;width:654.6px;height:0.9px;background:#8f8d80"></div>
<div class="a" style="left:811.5px;top:65px;width:2.2px;height:669px;background:linear-gradient(90deg,#7aa6ec,#4a82de)"></div>
<div class="a" style="left:813.7px;top:65px;width:182.8px;height:669px;background:#ece9d8"></div>
<div class="a" style="left:813.7px;top:65.6px;width:182.8px;height:21.4px;background:linear-gradient(#fcd88c 0,#f9c460 30%,#f0a838 70%,#e8962a 100%)"></div>
<div class="a" style="left:813.7px;top:87px;width:182.8px;height:1.7px;background:#fff"></div>
<div class="a" style="left:816.4px;top:69.6px;width:2px;height:14px;background-image:repeating-linear-gradient(#5a3a10 0,#5a3a10 1.7px,rgba(255,255,255,0) 1.7px,rgba(255,255,255,0) 3.7px)"></div>
<span class="t" style="left:822.4px;top:69.6px;font-size:10px;font-weight:bold;transform:scaleX(0.908);-webkit-text-stroke:.25px #000">Advanced Properties</span>
<svg style="left:968.8px;top:73.2px" width="5.6" height="7.2" viewBox="0 0 7 9"><path d="M1.8 0.7H5.2V4.4H1.8Z" fill="none" stroke="#000" stroke-width="1"/><path d="M4.6 0.7V4.4" stroke="#000" stroke-width="1.2"/><path d="M0.4 4.8H6.6" stroke="#000" stroke-width="1.1"/><path d="M3.5 5V8.6" stroke="#000" stroke-width="1"/></svg>
<svg style="left:982.8px;top:72.8px" width="8" height="7" viewBox="0 0 8 7"><path d="M1 0.6L7 6.4M7 0.6L1 6.4" stroke="#000" stroke-width="1.9"/></svg>
<div class="a" style="left:813.9px;top:88.7px;width:182.4px;height:16px;background:#fff;border:1px solid #7f9db9"></div>
<span class="t" style="left:816.8px;top:90.9px;font-size:10px;transform:scaleX(0.806);">Grid1</span>
<div class="a" style="left:982.3px;top:90px;width:13px;height:13.6px;background:linear-gradient(#d2e0fc,#b6cbf6);border-radius:2px;border:1px solid #b4c8f4"></div>
<svg style="left:985.2px;top:94.4px" width="7" height="5" viewBox="0 0 7 5"><path d="M0.6 0.8L3.5 3.8L6.4 0.8" fill="none" stroke="#4a62a0" stroke-width="1.6"/></svg>
<div class="a" style="left:813.7px;top:105.2px;width:182.8px;height:24.2px;background:linear-gradient(#f6f5ec 0,#eeecdf 50%,#dedbc6 100%)"></div>
<div class="a" style="left:813.7px;top:128.6px;width:182.8px;height:1px;background:#c9c6b2"></div>
<div class="a" style="left:833.4px;top:109px;width:1px;height:17px;background:#cfccb9"></div>
<div class="a" style="left:853.8px;top:109px;width:1px;height:17px;background:#cfccb9"></div>
<svg style="left:817.4px;top:110.8px" width="12" height="14" viewBox="0 0 12 14" preserveAspectRatio="none"><g fill="none" stroke="#555" stroke-width=".9"><rect x=".5" y=".6" width="3.6" height="3.6"/><rect x=".5" y="8.6" width="3.6" height="3.6"/></g><path d="M1.2 2.4H3.4M2.3 1.3V3.5M1.2 10.4H3.4" stroke="#000" stroke-width=".8"/><g fill="#666"><rect x="5.4" y="1.6" width="5.6" height="1"/><rect x="6.4" y="4.6" width="4.6" height="1"/><rect x="6.4" y="6.8" width="4.6" height="1"/><rect x="5.4" y="10" width="5.6" height="1"/><rect x="6.4" y="12.6" width="4.6" height="1"/></g></svg>
<span class="t" style="left:838.6px;top:110px;font-weight:bold;font-size:8.8px;line-height:8px;height:8px;color:#111;transform:scaleX(.85)">A</span><span class="t" style="left:838.8px;top:117.2px;font-weight:bold;font-size:8.8px;line-height:8px;height:8px;color:#111;transform:scaleX(.85)">Z</span>
<svg style="left:845.2px;top:111.4px" width="4.6" height="12.6" viewBox="0 0 4.6 12.6" preserveAspectRatio="none"><path d="M2.4 0V10.4" stroke="#1c2f9c" stroke-width="1.3"/><path d="M0 9.4H4.8L2.4 13.4Z" fill="#1c2f9c"/></svg>
<svg style="left:860.4px;top:112.2px" width="12" height="10" viewBox="0 0 12 10" preserveAspectRatio="none"><rect x=".5" y=".5" width="10.6" height="8.6" fill="#e8e6dc" stroke="#b4b2a4" stroke-width="1"/><rect x="2" y="2.4" width="5" height="1" fill="#b4b2a4"/><rect x="2" y="3.4" width="7.6" height="3.6" fill="none" stroke="#bcbab0" stroke-width=".8"/></svg>
<div class="a" style="left:813.9px;top:129.6px;width:182.4px;height:532.8px;background:#fff;border:1px solid #aca899"></div>
<div class="a" style="left:826.3px;top:236px;width:71.3px;height:12.2px;background:#316ac5"></div>
<div class="a" style="left:827px;top:143.9px;width:168.5px;height:0.8px;background:#f6f5ef"></div>
<span class="t" style="left:828.3px;top:131.4px;font-size:10px;transform:scaleX(0.815);">CSSClass</span>
<div class="a" style="left:827px;top:157.03px;width:168.5px;height:0.8px;background:#f6f5ef"></div>
<span class="t" style="left:828.3px;top:144.6px;font-size:10px;transform:scaleX(0.815);">CSSStyle</span>
<div class="a" style="left:827px;top:170.16px;width:168.5px;height:0.8px;background:#f6f5ef"></div>
<span class="t" style="left:828.3px;top:157.7px;font-size:10px;transform:scaleX(0.815);">DataSource</span>
<div class="a" style="left:827px;top:183.29000000000002px;width:168.5px;height:0.8px;background:#f6f5ef"></div>
<span class="t" style="left:828.3px;top:170.8px;font-size:10px;transform:scaleX(0.815);">InstanceName</span>
<span class="t" style="left:901.6px;top:170.9px;font-size:10px;font-weight:bold;transform:scaleX(0.892);">Grid1</span>
<div class="a" style="left:827px;top:196.42000000000002px;width:168.5px;height:0.8px;background:#f6f5ef"></div>
<span class="t" style="left:828.3px;top:184.0px;font-size:10px;transform:scaleX(0.815);">Locked</span>
<span class="t" style="left:901.6px;top:184.1px;font-size:10px;font-weight:bold;transform:scaleX(0.934);">False</span>
<div class="a" style="left:827px;top:209.55px;width:168.5px;height:0.8px;background:#f6f5ef"></div>
<span class="t" style="left:828.3px;top:197.1px;font-size:10px;transform:scaleX(0.815);">Position</span>
<span class="t" style="left:901.6px;top:197.2px;font-size:10px;font-weight:bold;transform:scaleX(1.045);">107, 386</span>
<div class="a" style="left:816.2px;top:198.85px;width:7.4px;height:7.6px;border:1px solid #666;background:#fff"></div>
<div class="a" style="left:818px;top:202.15px;width:3.8px;height:1px;background:#000"></div>
<div class="a" style="left:827px;top:222.68px;width:168.5px;height:0.8px;background:#f6f5ef"></div>
<span class="t" style="left:838.7px;top:210.2px;font-size:10px;transform:scaleX(0.815);">X</span>
<span class="t" style="left:901.6px;top:210.3px;font-size:10px;font-weight:bold;transform:scaleX(1.007);">107</span>
<div class="a" style="left:827px;top:235.81px;width:168.5px;height:0.8px;background:#f6f5ef"></div>
<span class="t" style="left:838.7px;top:223.3px;font-size:10px;transform:scaleX(0.815);">Y</span>
<span class="t" style="left:901.6px;top:223.4px;font-size:10px;font-weight:bold;transform:scaleX(1.007);">386</span>
<div class="a" style="left:827px;top:248.94px;width:168.5px;height:0.8px;background:#f6f5ef"></div>
<span class="t" style="left:828.3px;top:236.5px;font-size:10px;color:#fff;transform:scaleX(0.815);">Size</span>
<span class="t" style="left:901.6px;top:236.6px;font-size:10px;font-weight:bold;transform:scaleX(1.045);">450, 160</span>
<div class="a" style="left:816.2px;top:238.23999999999998px;width:7.4px;height:7.6px;border:1px solid #666;background:#fff"></div>
<div class="a" style="left:818px;top:241.54px;width:3.8px;height:1px;background:#000"></div>
<div class="a" style="left:827px;top:262.07px;width:168.5px;height:0.8px;background:#f6f5ef"></div>
<span class="t" style="left:838.7px;top:249.6px;font-size:10px;transform:scaleX(0.815);">Width</span>
<span class="t" style="left:901.6px;top:249.7px;font-size:10px;font-weight:bold;transform:scaleX(1.007);">450</span>
<div class="a" style="left:827px;top:275.2px;width:168.5px;height:0.8px;background:#f6f5ef"></div>
<span class="t" style="left:838.7px;top:262.7px;font-size:10px;transform:scaleX(0.815);">Height</span>
<span class="t" style="left:901.6px;top:262.8px;font-size:10px;font-weight:bold;transform:scaleX(1.007);">160</span>
<div class="a" style="left:827px;top:288.33px;width:168.5px;height:0.8px;background:#f6f5ef"></div>
<span class="t" style="left:828.3px;top:275.9px;font-size:10px;transform:scaleX(0.815);">Tooltip</span>
<div class="a" style="left:827px;top:301.46px;width:168.5px;height:0.8px;background:#f6f5ef"></div>
<span class="t" style="left:828.3px;top:289.0px;font-size:10px;transform:scaleX(0.815);">ZOrder</span>
<span class="t" style="left:901.6px;top:289.1px;font-size:10px;font-weight:bold;transform:scaleX(0.971);">0</span>
<div class="a" style="left:897.6px;top:130.6px;width:0.9px;height:170.6px;background:#ecebe2"></div>
<div class="a" style="left:813.9px;top:666px;width:182.4px;height:47.6px;border:1px solid #aca899;background:#ece9d8"></div>
<span class="t" style="left:817.6px;top:667.9px;font-size:10px;font-weight:bold;transform:scaleX(0.984);">Size</span>
<span class="t" style="left:817.6px;top:679.9px;font-size:10px;transform:scaleX(0.860);">Sets the control size.</span>
<div class="a" style="left:813.7px;top:714.4px;width:182.8px;height:19.4px;background:#fbfaf6"></div>
<div class="a" style="left:813.7px;top:714.2px;width:182.8px;height:1px;background:#aca899"></div>
<div class="a" style="left:813.7px;top:715.4px;width:77.5px;height:1.4px;background:#c9c7ba"></div>
<div class="a" style="left:891px;top:715px;width:93.5px;height:17.6px;background:#fefefd;border-right:1px solid #8f8d80;border-bottom:1px solid #8f8d80;border-radius:0 0 2px 2px"></div>
<span class="t" style="left:821.4px;top:718.5px;font-size:10px;transform:scaleX(0.857);">Basic Properties</span>
<span class="t" style="left:897.3px;top:718.5px;font-size:10px;transform:scaleX(0.879);">Advanced Properties</span>
<div class="a" style="left:3.4px;top:733.6px;width:993px;height:18px;background:linear-gradient(#dde9fb 0,#c3d8f7 25%,#a4c1ef 65%,#86abe6 100%)"></div>
<svg style="left:984.4px;top:740.2px" width="10" height="10" viewBox="0 0 10 10"><g fill="#f4f8ff"><rect x="7.4" y=".9" width="1.6" height="1.6"/><rect x="7.4" y="4.15" width="1.6" height="1.6"/><rect x="4.15" y="4.15" width="1.6" height="1.6"/><rect x="7.4" y="7.4" width="1.6" height="1.6"/><rect x="4.15" y="7.4" width="1.6" height="1.6"/><rect x=".9" y="7.4" width="1.6" height="1.6"/></g><g fill="#1f3478"><rect x="6.5" y="0" width="1.6" height="1.6"/><rect x="6.5" y="3.25" width="1.6" height="1.6"/><rect x="3.25" y="3.25" width="1.6" height="1.6"/><rect x="6.5" y="6.5" width="1.6" height="1.6"/><rect x="3.25" y="6.5" width="1.6" height="1.6"/><rect x="0" y="6.5" width="1.6" height="1.6"/></g></svg>
</body></html>
